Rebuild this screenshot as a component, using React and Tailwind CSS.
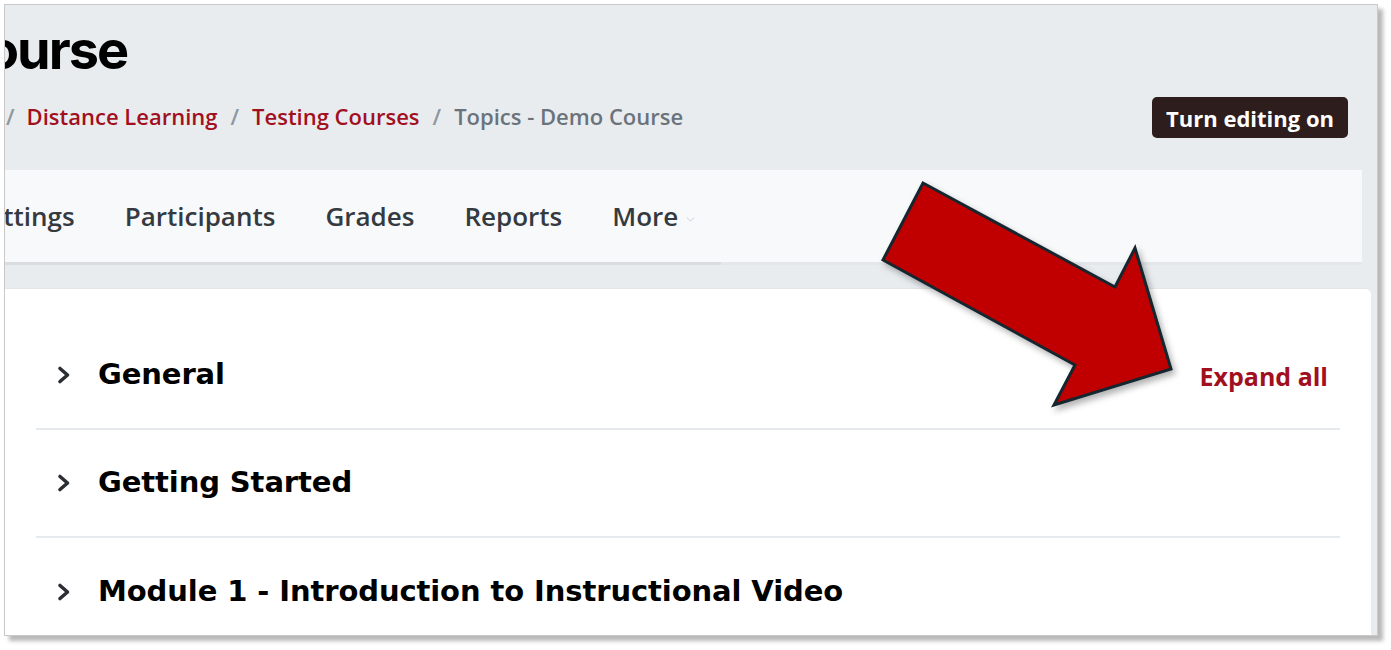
import { ChevronDown } from 'lucide-react';

const crumbs = [
  { label: 'Distance Learning', link: true },
  { label: 'Testing Courses', link: true },
  { label: 'Topics - Demo Course', link: false },
];

const tabs = ['Settings', 'Participants', 'Grades', 'Reports'];

const sections = ['General', 'Getting Started', 'Module 1 - Introduction to Instructional Video'];

function Chevron() {
  return (
    <svg width="16" height="20" viewBox="0 0 16 20" className="ml-[20px] shrink-0">
      <path d="M4 3.5 L11.5 10 L4 16.5" fill="none" stroke="#2b2f33" strokeWidth="3.6" strokeLinecap="round" strokeLinejoin="round" />
    </svg>
  );
}

function Arrow() {
  return (
    <svg className="pointer-events-none absolute left-0 top-0" width="1391" height="650" viewBox="0 0 1391 650">
      <defs>
        <filter id="drop" x="-20%" y="-20%" width="140%" height="140%">
          <feDropShadow dx="3" dy="4" stdDeviation="3" floodColor="#000" floodOpacity="0.3" />
        </filter>
      </defs>
      <polygon
        points="923,183 1115,287 1135,248 1171,369 1054,405 1075,365 883,260"
        fill="#c00000"
        stroke="#14262f"
        strokeWidth="3"
        strokeLinejoin="miter"
        filter="url(#drop)"
      />
    </svg>
  );
}

export default function App() {
  return (
    <div className="relative h-[650px] w-[1391px] bg-white p-1">
      <div className="h-[632px] w-[1374px] overflow-hidden border border-[#c9c9c9] bg-[#e9ecef] shadow-[5px_5px_4px_rgba(0,0,0,0.28)]">
        <div className="pl-px pr-[29px]">
          <h1 className="ml-[-58px] h-[84px] pt-[10px] font-['Inter',sans-serif] text-[54px] font-bold leading-[70px] tracking-[-2px] text-black">
            Course
          </h1>
          <div className="flex h-[58px] items-center justify-between">
            <nav className="mt-[-3px] flex items-center font-['Open_Sans',sans-serif] text-[22px] font-semibold">
              {crumbs.map((c, i) => (
                <span key={c.label} className="flex items-center">
                  <span className={i === 0 ? 'mr-[12px] text-[#8e979e]' : 'mx-[13px] text-[#8e979e]'}>/</span>
                  <span className={c.link ? 'text-[#a1101e]' : 'text-[#6a737b]'}>{c.label}</span>
                </span>
              ))}
            </nav>
            <button className="mt-[-1px] h-[41px] rounded-[5px] bg-[#2e1d1d] px-[14px] font-['Open_Sans',sans-serif] text-[22px] font-bold leading-none text-white">
              Turn editing on
            </button>
          </div>
        </div>
        <div className="mt-[23px] w-[1357px]">
          <div className="flex h-[92px] items-center overflow-hidden bg-[#f8f9fa] font-['Open_Sans',sans-serif] text-[26px] font-semibold text-[#343a40]">
            <div className="ml-[-31px] flex items-center gap-[50px]">
              {tabs.map((t) => (
                <span key={t}>{t}</span>
              ))}
              <span className="flex items-center">
                More
                <ChevronDown className="ml-[6px] mt-[6px] h-[13px] w-[13px] text-[#d9dde1]" strokeWidth={2} />
              </span>
            </div>
          </div>
          <div className="flex h-[3px]">
            <div className="w-[716px] bg-[#dadde0]" />
            <div className="flex-1 bg-[#e4e7ea]" />
          </div>
        </div>
        <div className="mt-[23px] h-[360px] w-[1366px] rounded-tr-[6px] border-t border-[#e3e6e9] bg-white px-[31px] pt-[33px]">
          {sections.map((s, i) => (
            <div
              key={s}
              className={
                i < sections.length - 1
                  ? 'flex h-[108px] items-center justify-between border-b-2 border-[#e6e9ed]'
                  : 'flex h-[108px] items-center justify-between'
              }
            >
              <div className="flex items-center">
                <Chevron />
                <span className="ml-[26px] font-['DejaVu_Sans',sans-serif] text-[29px] font-bold tracking-[-0.1px] text-black">
                  {s}
                </span>
              </div>
              {i === 0 && (
                <span className="mr-[12px] mt-[4px] font-['Open_Sans',sans-serif] text-[25px] font-bold text-[#a1101e]">
                  Expand all
                </span>
              )}
            </div>
          ))}
        </div>
      </div>
      <Arrow />
    </div>
  );
}
